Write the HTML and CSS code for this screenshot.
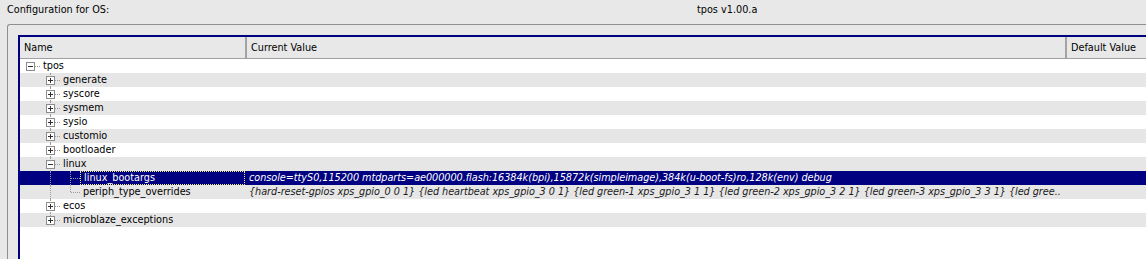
FILE: index.html
```html
<!DOCTYPE html>
<html lang="en">
<head>
  <meta charset="UTF-8" />
  <title>Configuration for OS</title>
  <link rel="stylesheet" href="styles.css">
</head>
<body>

<div class="topbar">
  <span class="caption">Configuration for OS:</span>
  <span class="title">tpos v1.00.a</span>
</div>

<div class="group">
  <div class="tree">
    <div class="head">
      <div class="hcol name-col">Name</div>
      <div class="hcol value-col">Current Value</div>
      <div class="hcol default-col">Default Value</div>
    </div>

    <div class="row">
      <div class="name-col"><span class="cell stub"><i class="box minus"></i></span><span class="label">tpos</span></div>
      <div class="value-col"></div>
    </div>
    <div class="row alt">
      <div class="name-col"><span class="cell"></span><span class="cell tee"><i class="box"></i></span><span class="label">generate</span></div>
      <div class="value-col"></div>
    </div>
    <div class="row">
      <div class="name-col"><span class="cell"></span><span class="cell tee"><i class="box"></i></span><span class="label">syscore</span></div>
      <div class="value-col"></div>
    </div>
    <div class="row alt">
      <div class="name-col"><span class="cell"></span><span class="cell tee"><i class="box"></i></span><span class="label">sysmem</span></div>
      <div class="value-col"></div>
    </div>
    <div class="row">
      <div class="name-col"><span class="cell"></span><span class="cell tee"><i class="box"></i></span><span class="label">sysio</span></div>
      <div class="value-col"></div>
    </div>
    <div class="row alt">
      <div class="name-col"><span class="cell"></span><span class="cell tee"><i class="box"></i></span><span class="label">customio</span></div>
      <div class="value-col"></div>
    </div>
    <div class="row">
      <div class="name-col"><span class="cell"></span><span class="cell tee"><i class="box"></i></span><span class="label">bootloader</span></div>
      <div class="value-col"></div>
    </div>
    <div class="row alt">
      <div class="name-col"><span class="cell"></span><span class="cell tee"><i class="box minus"></i></span><span class="label">linux</span></div>
      <div class="value-col"></div>
    </div>
    <div class="row selected">
      <div class="name-col"><span class="cell"></span><span class="cell pipe"></span><span class="cell tee"></span><span class="label focus">linux_bootargs</span></div>
      <div class="value-col">console=ttyS0,115200 mtdparts=ae000000.flash:16384k(bpi),15872k(simpleimage),384k(u-boot-fs)ro,128k(env) debug</div>
    </div>
    <div class="row alt">
      <div class="name-col"><span class="cell"></span><span class="cell pipe"></span><span class="cell elbow"></span><span class="label">periph_type_overrides</span></div>
      <div class="value-col">{hard-reset-gpios xps_gpio_0 0 1} {led heartbeat xps_gpio_3 0 1} {led green-1 xps_gpio_3 1 1} {led green-2 xps_gpio_3 2 1} {led green-3 xps_gpio_3 3 1} {led gree..</div>
    </div>
    <div class="row">
      <div class="name-col"><span class="cell"></span><span class="cell tee"><i class="box"></i></span><span class="label">ecos</span></div>
      <div class="value-col"></div>
    </div>
    <div class="row alt">
      <div class="name-col"><span class="cell"></span><span class="cell elbow"><i class="box"></i></span><span class="label">microblaze_exceptions</span></div>
      <div class="value-col"></div>
    </div>
  </div>
</div>

</body>
</html>
```

FILE: styles.css
```css
html, body {
  margin: 0;
  padding: 0;
  background: #e8e8e8;
  color: #000000;
  font-family: 'DejaVu Sans', sans-serif;
  font-size: 9.7px;
  overflow: hidden;
}

.topbar {
  display: flex;
  height: 24px;
  line-height: 20px;
  padding-left: 7px;
  box-sizing: border-box;
}

.caption {
  width: 690px;
}

.group {
  margin-left: 7px;
  border: 1px solid #8f8f8f;
  border-right: none;
  border-bottom: none;
  border-top-left-radius: 3px;
  padding: 10px 0 0 10px;
  height: 224px;
}

.tree {
  background: #ffffff;
  border-top: 2px solid #000080;
  border-left: 2px solid #000080;
  height: 100%;
  box-sizing: border-box;
}

.head {
  display: flex;
  height: 22px;
  line-height: 21px;
  background: #e8e8e8;
  border-bottom: 1px solid #a0a0a0;
  box-sizing: border-box;
}

.hcol {
  padding-left: 4px;
  box-sizing: border-box;
}

.name-col {
  width: 225px;
  flex: none;
}

.value-col {
  width: 820px;
  flex: none;
}

.default-col {
  flex: 1;
}

.head .value-col, .head .default-col {
  border-left: 2px solid #a3a3a3;
  padding-left: 4px;
}

.row {
  display: flex;
  height: 14px;
  line-height: 14px;
  white-space: nowrap;
}

.row.alt {
  background: #e6e6e6;
}

.row.selected {
  background: #000080;
  color: #ffffff;
}

.row .name-col {
  display: flex;
}

.row .value-col {
  padding-left: 4px;
  box-sizing: border-box;
  font-style: italic;
  letter-spacing: -0.04px;
  overflow: hidden;
  color: #1a1a1a;
}

.row.selected .value-col {
  color: #ffffff;
}

.label {
  flex: 1;
  padding-left: 3px;
  box-sizing: border-box;
}

.label.focus {
  border: 1px dotted #f0f070;
  line-height: 12px;
  padding-left: 3px;
}

/* tree branch cells */
.cell {
  position: relative;
  width: 20px;
  height: 14px;
  flex: none;
}

.pipe::before, .tee::before, .elbow::before {
  content: "";
  position: absolute;
  left: 10px;
  top: 0;
  height: 14px;
  border-left: 1px dotted #9a9a9a;
}

.elbow::before {
  height: 7px;
}

.tee::after, .elbow::after, .stub::after {
  content: "";
  position: absolute;
  left: 11px;
  top: 7px;
  width: 9px;
  border-top: 1px dotted #9a9a9a;
}

.box {
  position: absolute;
  left: 6px;
  top: 3px;
  width: 7px;
  height: 7px;
  border: 1px solid #8c8c8c;
  background: #ffffff;
  z-index: 1;
}

.box::before, .box::after {
  content: "";
  position: absolute;
  background: #303030;
}

.box::before {
  left: 1px;
  top: 3px;
  width: 5px;
  height: 1px;
}

.box::after {
  left: 3px;
  top: 1px;
  width: 1px;
  height: 5px;
}

.box.minus::after {
  display: none;
}
```
